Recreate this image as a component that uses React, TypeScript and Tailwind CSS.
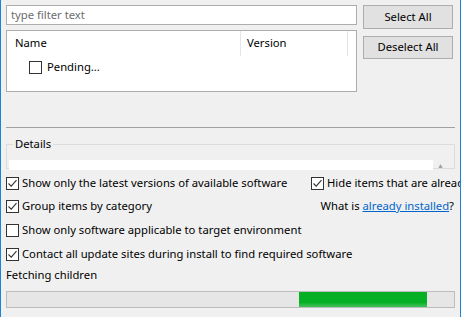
import React from 'react';

const font = { fontFamily: '"Segoe UI", "Noto Sans", "Liberation Sans", sans-serif' };

function Check({ checked }: { checked?: boolean }) {
  return (
    <span className="w-[13px] h-[13px] border border-[#333333] bg-white flex items-center justify-center shrink-0">
      {checked && (
        <svg width="11" height="11" viewBox="0 0 11 11">
          <path d="M1.5 5.5 L4.2 8.2 L9.5 2.2" fill="none" stroke="#333333" strokeWidth="1.1" />
        </svg>
      )}
    </span>
  );
}

function Option({ checked, label }: { checked?: boolean; label: string }) {
  return (
    <label className="flex items-center gap-[3px] whitespace-nowrap">
      <Check checked={checked} />
      <span>{label}</span>
    </label>
  );
}

export default function App() {
  return (
    <div
      style={font}
      className="w-[461px] h-[317px] bg-[#f0f0f0] border-l border-r border-[#1883d7] text-[11.25px] text-black overflow-hidden flex flex-col"
    >
      <div className="flex pl-[5px] pt-[5px] gap-[6px]">
        <div className="w-[351px] flex flex-col gap-[5px]">
          <div className="h-[20px] border border-[#adadad] bg-white px-[4px] flex items-center text-[#6d6d6d]">
            type filter text
          </div>
          <div className="h-[62px] border border-[#adadad] bg-white">
            <div className="flex h-[25px]">
              <div className="w-[234px] pl-[8px] h-full flex items-center border-r border-[#e5e5e5]">Name</div>
              <div className="w-[107px] pl-[6px] h-full flex items-center border-r border-[#e5e5e5]">Version</div>
            </div>
            <div className="flex items-center gap-[5px] pl-[22px] pt-[3px]">
              <Check />
              <span>Pending...</span>
            </div>
          </div>
        </div>
        <div className="w-[90px] flex flex-col gap-[7px]">
          <button className="h-[24px] border border-[#adadad] bg-[#e1e1e1]">Select All</button>
          <button className="h-[23px] border border-[#adadad] bg-[#e1e1e1]">Deselect All</button>
        </div>
      </div>

      <div className="mt-[35px] mx-[5px] h-[1px] bg-[#a0a0a0]" />

      <div className="mt-[16px] mx-[5px] relative border border-[#dcdcdc] h-[25px]">
        <span className="absolute left-[6px] top-[-9px] bg-[#f0f0f0] px-[2px] leading-[16px]">Details</span>
        <div className="mt-[15px] ml-[2px] mr-[21px] h-[10px] bg-white" />
        <span className="absolute right-[10px] top-[17px] text-[7px] text-[#a0a0a0] leading-none">▲</span>
      </div>

      <div className="mx-[5px] mt-[2px] flex flex-col">
        <div className="grid grid-cols-[305px_1fr] h-[24px] items-center">
          <Option checked label="Show only the latest versions of available software" />
          <Option checked label="Hide items that are already installed" />
        </div>
        <div className="flex justify-between h-[23px] items-center">
          <Option checked label="Group items by category" />
          <span className="whitespace-nowrap pr-[1px]">
            What is <span className="text-[#0066cc] underline">already installed</span>?
          </span>
        </div>
        <div className="flex h-[24px] items-center">
          <Option label="Show only software applicable to target environment" />
        </div>
        <div className="flex h-[24px] items-center">
          <Option checked label="Contact all update sites during install to find required software" />
        </div>
        <div className="h-[18px] flex items-center">Fetching children</div>
      </div>

      <div className="mx-[5px] mt-[7px] h-[17px] border border-[#bcbcbc] bg-[#e6e6e6] flex">
        <div className="ml-[292px] w-[128px] h-full bg-gradient-to-b from-[#06b025] from-70% to-[#3dc25a]" />
      </div>
    </div>
  );
}
